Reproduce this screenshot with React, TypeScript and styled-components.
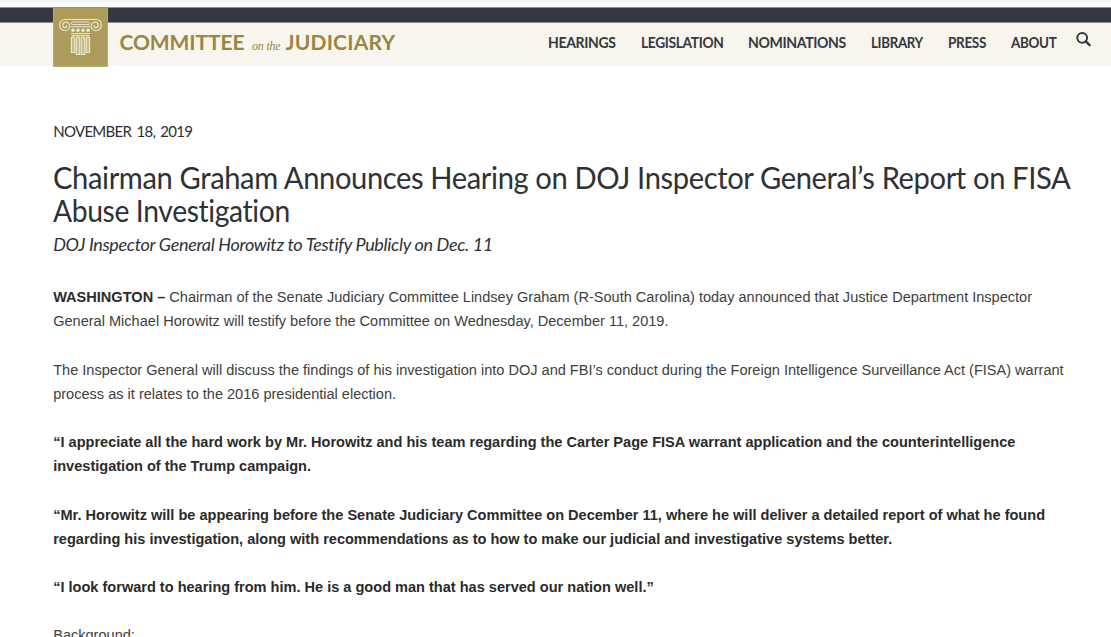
import styled, { createGlobalStyle } from "styled-components";

const GlobalStyle = createGlobalStyle`
  body {
    margin: 0;
    background: #fff;
    overflow: hidden;
  }
`;

const Page = styled.div`
  height: 637px;
  overflow: hidden;
  font-family: "Liberation Sans", Arial, sans-serif;
  color: #333;
`;

// Thin light strip that sits above the site header
const TopEdge = styled.div`
  height: 2px;
  margin-bottom: 5px;
  background: #f1f3f3;
`;

const DarkBar = styled.div`
  box-sizing: border-box;
  height: 16px;
  background: #353841;
  border-top: 1px solid #8d8f94;
  border-bottom: 1px solid #8f9092;
`;

const Header = styled.header`
  display: flex;
  align-items: flex-start;
  justify-content: space-between;
  height: 43px;
  padding: 0 20px 0 53px;
  background: #f8f5ee;
`;

const Brand = styled.div`
  display: flex;
`;

// Gold tile overlaps the dark bar above and the page below
const LogoTile = styled.div`
  box-sizing: border-box;
  width: 55px;
  height: 59px;
  margin-top: -15px;
  background: #ac9b5a;
  border: 1px solid #b9aa70;
  border-top: 0;
`;

const BrandName = styled.div`
  display: flex;
  align-items: baseline;
  margin: 6px 0 0 11.5px;
  font-family: Lato, sans-serif;
  color: #998642;
  line-height: 26px;
  white-space: nowrap;
`;

const BrandWord = styled.span<{ $width: number; $spacing: string }>`
  flex: none;
  width: ${(p) => p.$width}px;
  font-size: 21px;
  font-weight: 700;
  letter-spacing: ${(p) => p.$spacing};
`;

const BrandSmall = styled.span`
  flex: none;
  box-sizing: border-box;
  width: 42px;
  padding-left: 8.5px;
  font-family: "Liberation Serif", serif;
  font-style: italic;
  font-size: 12px;
  letter-spacing: -0.2px;
`;

const Nav = styled.nav`
  display: flex;
  margin-top: 7px;
  font-family: Lato, sans-serif;
`;

const NavItem = styled.a<{ $width: number; $stretch: number }>`
  width: ${(p) => p.$width}px;
  margin-right: 24.5px;
  font-size: 16px;
  font-weight: 700;
  line-height: 23px;
  letter-spacing: -0.4px;
  white-space: nowrap;
  color: #353841;
  transform: scaleX(${(p) => p.$stretch});
  transform-origin: left;

  &:last-of-type {
    margin-right: 19.3px;
  }
`;

const SearchIcon = styled.svg`
  width: 15px;
  height: 16px;
  margin-top: 1px;
`;

const Article = styled.main`
  padding: 55px 30px 0 53.2px;
`;

const DateLine = styled.div`
  font-family: Lato, sans-serif;
  font-size: 15px;
  line-height: 20px;
  letter-spacing: -0.7px;
  word-spacing: 2px;
  color: #2b2e34;
`;

const Title = styled.h1`
  margin: 20px 0 0;
  font-family: Lato, sans-serif;
  font-size: 30.5px;
  font-weight: 400;
  line-height: 33px;
  letter-spacing: -0.4px;
  white-space: nowrap;
  color: #2d3138;
`;

const TitleLine = styled.span<{ $stretch: number }>`
  display: block;
  width: max-content;
  transform: scaleX(${(p) => p.$stretch});
  transform-origin: left;
`;

const Subtitle = styled.h2`
  margin: 5px 0 0;
  font-family: Lato, sans-serif;
  font-size: 18px;
  font-style: italic;
  font-weight: 400;
  line-height: 24px;
  letter-spacing: -0.33px;
  white-space: nowrap;
  color: #2d3138;
`;

const Body = styled.div`
  margin-top: 29.3px;
  font-size: 14.55px;
  line-height: 24.16px;
`;

const Paragraph = styled.p<{ $bold?: boolean }>`
  margin: 0 0 24.16px;
  font-weight: ${(p) => (p.$bold ? 700 : 400)};
  color: ${(p) => (p.$bold ? "#2b2b2b" : "#404040")};
  white-space: nowrap;
`;

const Lead = styled.strong`
  color: #2b2b2b;
`;

const navItems = [
  { label: "HEARINGS", width: 68, stretch: 0.875 },
  { label: "LEGISLATION", width: 82.7, stretch: 0.86 },
  { label: "NOMINATIONS", width: 98.5, stretch: 0.879 },
  { label: "LIBRARY", width: 52.5, stretch: 0.833 },
  { label: "PRESS", width: 38.5, stretch: 0.846 },
  { label: "ABOUT", width: 46, stretch: 0.84 },
];

function ColumnLogo() {
  return (
    <svg width="53" height="58" viewBox="0 0 53 58" fill="none" stroke="#eeead0">
      {/* scrolls */}
      <path
        d="M26.5 11.5H11.5C7.5 11.5 5.7 14.3 5.7 17.2C5.7 20.5 8.3 22.5 11 22.5C14 22.5 15.8 20.2 15.8 17.9C15.8 15.6 14 14.2 12 14.2C10 14.2 8.8 15.7 8.8 17.3C8.8 18.8 10 19.7 11.2 19.7C12.6 19.7 13.2 18.4 12.6 17.2"
        strokeWidth="1.2"
      />
      <path
        d="M26.5 11.5H41.5C45.5 11.5 47.3 14.3 47.3 17.2C47.3 20.5 44.7 22.5 42 22.5C39 22.5 37.2 20.2 37.2 17.9C37.2 15.6 39 14.2 41 14.2C43 14.2 44.2 15.7 44.2 17.3C44.2 18.8 43 19.7 41.8 19.7C40.4 19.7 39.8 18.4 40.4 17.2"
        strokeWidth="1.2"
      />
      <rect x="17.5" y="14" width="18" height="2.6" rx="1" strokeWidth="1" />
      <path d="M17 18.8H36M17 25.5H36M17.5 27.5H35.5" strokeWidth="1" />
      <g fill="#eeead0" stroke="none">
        <circle cx="19" cy="22.2" r="1.8" />
        <circle cx="24" cy="22.2" r="1.8" />
        <circle cx="29" cy="22.2" r="1.8" />
        <circle cx="34" cy="22.2" r="1.8" />
      </g>
      {/* fluted shaft */}
      <g strokeWidth="1.1" fill="#c6ba89">
        <path d="M17.4 44.5V29.8Q19.1 28 20.8 29.8V44.5Z" />
        <path d="M22.3 46.5V29.8Q24 28 25.7 29.8V46.5Z" />
        <path d="M27.3 46.5V29.8Q29 28 30.7 29.8V46.5Z" />
        <path d="M32.2 44.5V29.8Q33.9 28 35.6 29.8V44.5Z" />
      </g>
    </svg>
  );
}

export default function App() {
  return (
    <Page>
      <GlobalStyle />
      <TopEdge />
      <DarkBar />
      <Header>
        <Brand>
          <LogoTile>
            <ColumnLogo />
          </LogoTile>
          <BrandName>
            <BrandWord $width={124} $spacing="-0.1px">COMMITTEE</BrandWord>
            <BrandSmall>on the</BrandSmall>
            <BrandWord $width={112} $spacing="0.2px">JUDICIARY</BrandWord>
          </BrandName>
        </Brand>
        <Nav>
          {navItems.map((item) => (
            <NavItem key={item.label} $width={item.width} $stretch={item.stretch}>
              {item.label}
            </NavItem>
          ))}
          <SearchIcon viewBox="0 0 15 16" fill="none" stroke="#353841">
            <circle cx="6.2" cy="6.8" r="4.9" strokeWidth="2" />
            <path d="M9.8 10.4L13.6 14.2" strokeWidth="2.4" strokeLinecap="round" />
          </SearchIcon>
        </Nav>
      </Header>

      <Article>
        <DateLine>NOVEMBER 18, 2019</DateLine>
        <Title>
          <TitleLine $stretch={0.955}>
            Chairman Graham Announces Hearing on DOJ Inspector General’s Report on FISA
          </TitleLine>
          <TitleLine $stretch={0.927}>Abuse Investigation</TitleLine>
        </Title>
        <Subtitle>DOJ Inspector General Horowitz to Testify Publicly on Dec. 11</Subtitle>

        <Body>
          <Paragraph>
            <Lead>WASHINGTON –</Lead> Chairman of the Senate Judiciary Committee Lindsey Graham
            (R-South Carolina) today announced that Justice Department Inspector
            <br />
            General Michael Horowitz will testify before the Committee on Wednesday, December 11,
            2019.
          </Paragraph>
          <Paragraph>
            The Inspector General will discuss the findings of his investigation into DOJ and FBI’s
            conduct during the Foreign Intelligence Surveillance Act (FISA) warrant
            <br />
            process as it relates to the 2016 presidential election.
          </Paragraph>
          <Paragraph $bold>
            “I appreciate all the hard work by Mr. Horowitz and his team regarding the Carter Page
            FISA warrant application and the counterintelligence
            <br />
            investigation of the Trump campaign.
          </Paragraph>
          <Paragraph $bold>
            “Mr. Horowitz will be appearing before the Senate Judiciary Committee on December 11,
            where he will deliver a detailed report of what he found
            <br />
            regarding his investigation, along with recommendations as to how to make our judicial
            and investigative systems better.
          </Paragraph>
          <Paragraph $bold>
            “I look forward to hearing from him. He is a good man that has served our nation well.”
          </Paragraph>
          <Paragraph>Background:</Paragraph>
        </Body>
      </Article>
    </Page>
  );
}
